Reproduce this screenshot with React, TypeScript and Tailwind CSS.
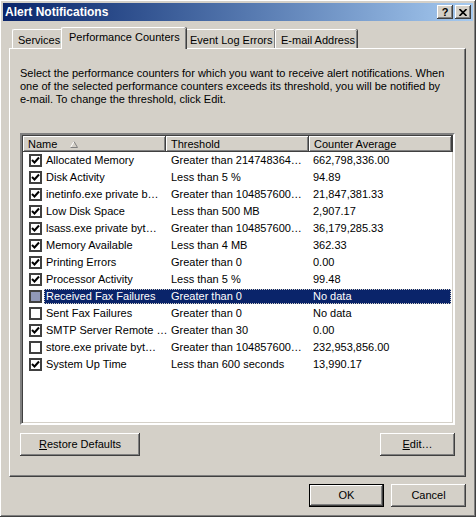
import React from 'react'

const raised =
  'shadow-[inset_-1px_-1px_0_#404040,inset_1px_1px_0_#ffffff,inset_-2px_-2px_0_#808080,inset_2px_2px_0_#d4d0c8]'

const rows = [
  { name: 'Allocated Memory', threshold: 'Greater than 214748364…', avg: '662,798,336.00', checked: true },
  { name: 'Disk Activity', threshold: 'Less than 5 %', avg: '94.89', checked: true },
  { name: 'inetinfo.exe private b…', threshold: 'Greater than 104857600…', avg: '21,847,381.33', checked: true },
  { name: 'Low Disk Space', threshold: 'Less than 500 MB', avg: '2,907.17', checked: true },
  { name: 'lsass.exe private byt…', threshold: 'Greater than 104857600…', avg: '36,179,285.33', checked: true },
  { name: 'Memory Available', threshold: 'Less than 4 MB', avg: '362.33', checked: true },
  { name: 'Printing Errors', threshold: 'Greater than 0', avg: '0.00', checked: true },
  { name: 'Processor Activity', threshold: 'Less than 5 %', avg: '99.48', checked: true },
  { name: 'Received Fax Failures', threshold: 'Greater than 0', avg: 'No data', checked: false, selected: true },
  { name: 'Sent Fax Failures', threshold: 'Greater than 0', avg: 'No data', checked: false },
  { name: 'SMTP Server Remote …', threshold: 'Greater than 30', avg: '0.00', checked: true },
  { name: 'store.exe private byt…', threshold: 'Greater than 104857600…', avg: '232,953,856.00', checked: false },
  { name: 'System Up Time', threshold: 'Less than 600 seconds', avg: '13,990.17', checked: true },
]

function CheckBox({ checked, selected }: { checked: boolean; selected?: boolean }) {
  return (
    <div
      className={`w-[13px] h-[13px] shrink-0 border-[2px] border-[#404040] ${
        selected ? 'bg-[#9098b8]' : 'bg-white'
      } flex items-center justify-center`}
    >
      {checked && (
        <svg width="9" height="9" viewBox="0 0 9 9" aria-hidden="true">
          <path d="M1 4 L3.5 6.5 L8 1.5" fill="none" stroke="#000" strokeWidth="2" />
        </svg>
      )}
    </div>
  )
}

function TabButton({ label, width, selected }: { label: string; width: string; selected?: boolean }) {
  if (selected) {
    return (
      <div
        className={`${width} h-[22px] -mx-[2px] -mb-[1px] relative z-10 bg-[#d4d0c8] border-t border-l border-white shadow-[inset_-1px_0_0_#808080,1px_0_0_#404040] rounded-t-[2px] flex items-start pl-[7px] pt-[3px]`}
      >
        {label}
      </div>
    )
  }
  return (
    <div
      className={`${width} h-[19px] bg-[#d4d0c8] border-t border-l border-white shadow-[inset_-1px_0_0_#808080,1px_0_0_#404040] rounded-t-[2px] flex items-start pl-[5px] pt-[4px]`}
    >
      {label}
    </div>
  )
}

export default function App() {
  return (
    <div className="w-[476px] h-[517px] overflow-hidden bg-white">
      <div
        className={`w-[476px] h-[517px] bg-[#d4d0c8] p-[3px] flex flex-col text-[11px] leading-[13px] text-black ${raised}`}
        style={{ fontFamily: '"Liberation Sans", Arial, sans-serif' }}
      >
        {/* Title bar */}
        <div className="h-[18px] shrink-0 bg-gradient-to-r from-[#0a246a] to-[#a6caf0] flex items-center pl-[2px] pr-[2px]">
          <span className="text-white font-bold text-[12px]">Alert Notifications</span>
          <div className="ml-auto flex gap-[2px]">
            <div className={`w-[16px] h-[14px] bg-[#d4d0c8] ${raised} flex items-center justify-center font-bold text-[11px] leading-none`}>
              ?
            </div>
            <div className={`w-[16px] h-[14px] bg-[#d4d0c8] ${raised} flex items-center justify-center`}>
              <svg width="8" height="7" viewBox="0 0 8 7" aria-hidden="true">
                <path d="M0.5 0 L7.5 7 M7.5 0 L0.5 7" stroke="#000" strokeWidth="1.6" />
              </svg>
            </div>
          </div>
        </div>

        {/* Tabs */}
        <div className="mt-[6px] h-[21px] shrink-0 flex items-end pl-[9px]">
          <TabButton label="Services" width="w-[51px]" />
          <TabButton label="Performance Counters" width="w-[125px]" selected />
          <TabButton label="Event Log Errors" width="w-[91px]" />
          <TabButton label="E-mail Address" width="w-[82px]" />
        </div>

        {/* Panel */}
        <div className="ml-[6px] mr-[7px] h-[429px] shrink-0 border-t border-l border-white border-r border-b border-r-[#404040] border-b-[#404040] shadow-[inset_-1px_-1px_0_#808080] flex flex-col pl-[10px] pr-[8px] pt-[18px]">
          <p className="w-[430px]">
            Select the performance counters for which you want to receive alert notifications. When one of the
            selected performance counters exceeds its threshold, you will be notified by e-mail. To change the
            threshold, click Edit.
          </p>

          {/* List view */}
          <div className="mt-[27px] w-[435px] h-[292px] bg-white border-[2px] border-t-[#808080] border-l-[#808080] border-r-white border-b-white shadow-[inset_1px_1px_0_#404040,inset_-1px_-1px_0_#d4d0c8] flex flex-col">
            <div className="ml-[1px] mt-[1px] h-[16px] flex shrink-0">
              {['Name', 'Threshold', 'Counter Average'].map((h, i) => (
                <div
                  key={h}
                  className={`w-[143px] h-[16px] bg-[#d4d0c8] ${raised} flex items-center pl-[5px]`}
                >
                  {h}
                  {i === 0 && (
                    <svg className="ml-[13px]" width="8" height="7" viewBox="0 0 8 7" aria-hidden="true">
                      <path d="M0.5 6.5 L4 0.5" stroke="#ffffff" strokeWidth="1" fill="none" />
                      <path d="M4 0.5 L7.5 6.5 L0.5 6.5" stroke="#808080" strokeWidth="1" fill="none" />
                    </svg>
                  )}
                </div>
              ))}
              <div className={`flex-1 h-[16px] bg-[#d4d0c8] ${raised}`} />
            </div>
            <div className="flex flex-col ml-[1px]">
              {rows.map((r) => (
                <div key={r.name} className="h-[17px] flex items-center">
                  <div className="w-[22px] pl-[6px] flex items-center">
                    <CheckBox checked={r.checked} selected={r.selected} />
                  </div>
                  <div
                    className={`flex-1 h-[15px] flex items-center ${
                      r.selected ? 'bg-[#0a246a] text-white outline-1 outline-dotted outline-[#d4d0c8] -outline-offset-1' : ''
                    } mr-[2px]`}
                  >
                    <div className="w-[121px] shrink-0 pl-[2px] whitespace-nowrap">{r.name}</div>
                    <div className="w-[143px] shrink-0 pl-[6px] whitespace-nowrap overflow-hidden">{r.threshold}</div>
                    <div className="w-[143px] shrink-0 pl-[5px] whitespace-nowrap overflow-hidden">{r.avg}</div>
                  </div>
                </div>
              ))}
            </div>
          </div>

          <div className="mt-[8px] w-[435px] flex justify-between">
            <button className={`w-[120px] h-[23px] bg-[#d4d0c8] ${raised} flex items-center justify-center`}>
              <span>
                <span className="underline">R</span>estore Defaults
              </span>
            </button>
            <button className={`w-[75px] h-[23px] bg-[#d4d0c8] ${raised} flex items-center justify-center`}>
              <span>
                <span className="underline">E</span>dit…
              </span>
            </button>
          </div>
        </div>

        {/* Bottom buttons */}
        <div className="mt-[7px] mr-[7px] flex justify-end gap-[7px]">
          <button className="w-[75px] h-[23px] border border-black bg-[#d4d0c8] shadow-[inset_-1px_-1px_0_#404040,inset_1px_1px_0_#ffffff,inset_-2px_-2px_0_#808080] flex items-center justify-center">
            OK
          </button>
          <button className={`w-[75px] h-[23px] bg-[#d4d0c8] ${raised} flex items-center justify-center`}>
            Cancel
          </button>
        </div>
      </div>
    </div>
  )
}
